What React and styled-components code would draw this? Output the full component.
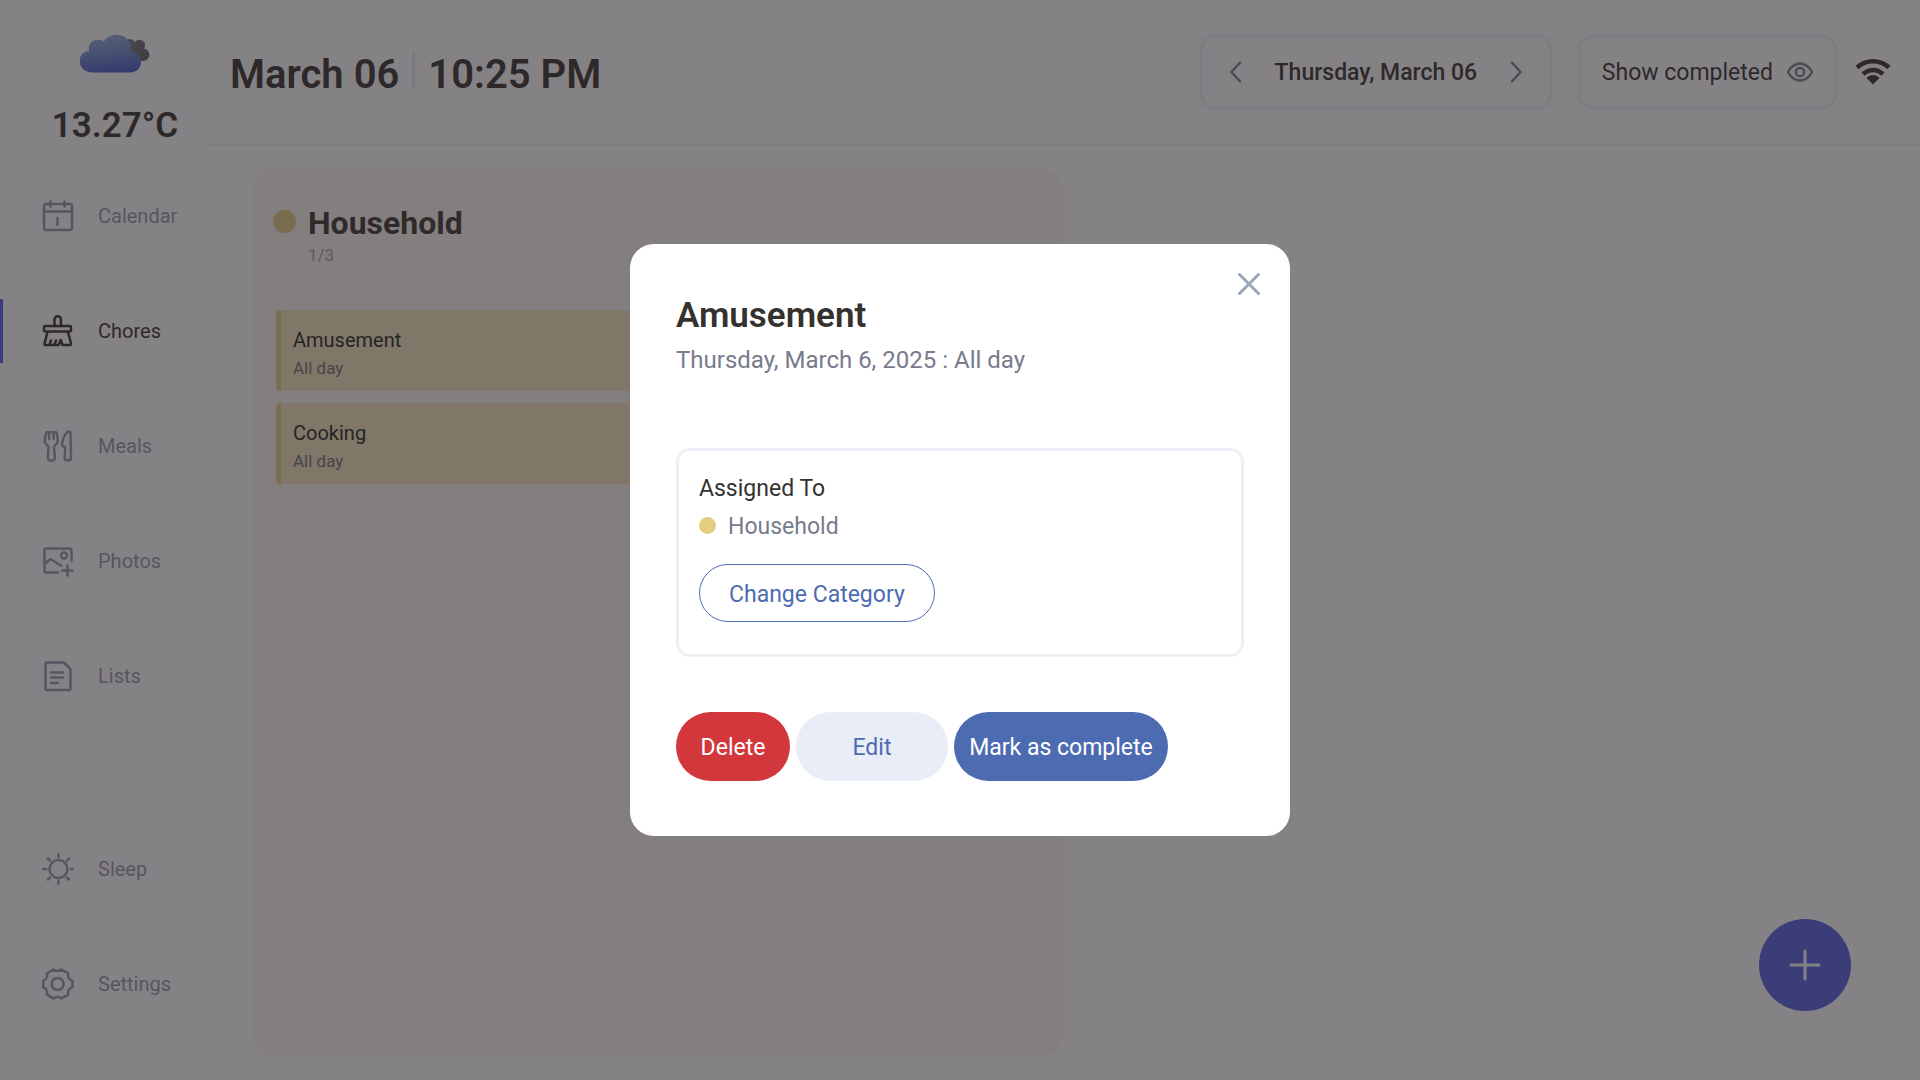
import styled, { createGlobalStyle } from 'styled-components'
import { useState } from 'react'

const GlobalStyle = createGlobalStyle`
    * {
        box-sizing: border-box;
    }
    body {
        margin: 0;
        font-family: Roboto, "Liberation Sans", sans-serif;
        color: #34322d;
        background-color: white;
    }
    button {
        font-family: inherit;
        cursor: pointer;
    }
    svg {
        display: block;
        flex-shrink: 0;
    }
`

const Container = styled.div`
    display: flex;
    min-height: 100vh;
`

const Sidebar = styled.aside`
    width: 205px;
    flex-shrink: 0;
    display: flex;
    flex-direction: column;
    padding-bottom: 64px;
    box-shadow: 4px 0 8px rgba(120, 130, 160, 0.03);
`

const Weather = styled.div`
    height: 184px;
    display: flex;
    flex-direction: column;
    align-items: center;
    padding: 34px 0 0 25px;
`

const Temperature = styled.span`
    margin-top: 33px;
    font-size: 35px;
    line-height: 40px;
    font-weight: 600;
`

const Nav = styled.nav`
    flex: 1;
    display: flex;
    flex-direction: column;
    gap: 51px;
`

const NavLink = styled.a`
    height: 64px;
    display: flex;
    align-items: center;
    gap: 24px;
    padding-left: 39px;
    margin-right: 5px;
    margin-top: ${props => props.$push ? "auto" : "0"};
    border-left: 3px solid ${props => props.$active ? "#5260e0" : "transparent"};
    box-shadow: ${props => props.$active ? "0 -8px 8px -6px rgba(120, 130, 160, 0.06), 0 8px 8px -6px rgba(120, 130, 160, 0.06)" : "none"};
    color: ${props => props.$active ? "#34322d" : "#9499aa"};
    font-size: 20px;
    text-decoration: none;
`

const Main = styled.main`
    flex: 1;
    display: flex;
    flex-direction: column;
`

const Header = styled.header`
    height: 145px;
    display: flex;
    align-items: center;
    justify-content: space-between;
    padding: 0 28px 0 25px;
    border-bottom: 1px solid #eceef4;
`

const Clock = styled.h1`
    margin: 0;
    padding-top: 4px;
    display: flex;
    align-items: center;
    gap: 13px;
    font-size: 40px;
    font-weight: 600;
`

const Divider = styled.span`
    width: 3px;
    height: 36px;
    margin-bottom: 6px;
    background-color: #e4e6ee;
`

const Tools = styled.div`
    display: flex;
    align-items: center;
`

const DateBox = styled.div`
    width: 352px;
    height: 74px;
    display: flex;
    align-items: center;
    justify-content: space-between;
    padding: 0 22px;
    border: 3px solid #f3f4f9;
    border-radius: 14px;
    font-size: 23px;
    font-weight: 500;
`

const ArrowButton = styled.button`
    padding: 4px;
    border: none;
    background: none;
    color: #83818c;
`

const ShowButton = styled.button`
    height: 74px;
    display: flex;
    align-items: center;
    gap: 14px;
    margin: 0 17px 0 26px;
    padding: 0 21px;
    border: 3px solid #f3f4f9;
    border-radius: 14px;
    background: none;
    color: #34322d;
    font-size: 23px;
`

const Board = styled.section`
    flex: 1;
    padding: 23px 48px;
    display: flex;
    background-color: #fefeff;
`

const Category = styled.article`
    width: 50%;
    padding: 36px 23px;
    border-radius: 24px;
    background-color: #fdf8f1;
`

const Dot = styled.span`
    width: ${props => props.$size}px;
    height: ${props => props.$size}px;
    border-radius: 50%;
    background-color: #e5cd80;
`

const CategoryHead = styled.div`
    display: flex;
    align-items: flex-start;
    gap: 12px;
    margin: 0 0 43px -3px;

    ${Dot} {
        margin-top: 6px;
    }
`

const CategoryName = styled.h2`
    margin: 0;
    font-size: 32px;
    line-height: 38px;
    font-weight: 700;
    color: #3d342f;
`

const Count = styled.span`
    display: block;
    margin-top: 1px;
    font-size: 17px;
    line-height: 24px;
    color: #9aa3b5;
`

const TaskList = styled.ul`
    margin: 0;
    padding: 0;
    list-style: none;
    display: flex;
    flex-direction: column;
    gap: 12px;
`

const Task = styled.li`
    height: 81px;
    padding: 16px 12px;
    border-left: 5px solid #e5cd80;
    border-radius: 4px;
    background-color: #f4e5bf;
`

const TaskName = styled.div`
    font-size: 20px;
    line-height: 28px;
    color: #22261f;
`

const TaskTime = styled.div`
    font-size: 17px;
    line-height: 28px;
    color: #6d6f78;
`

const AddButton = styled.button`
    position: fixed;
    right: 69px;
    bottom: 69px;
    width: 92px;
    height: 92px;
    display: flex;
    align-items: center;
    justify-content: center;
    border: none;
    border-radius: 50%;
    background-color: #5260e0;
    color: white;
`

const Overlay = styled.div`
    position: fixed;
    inset: 0;
    display: flex;
    align-items: center;
    justify-content: center;
    background-color: rgba(40, 36, 40, 0.567);
`

const Modal = styled.div`
    position: relative;
    width: 660px;
    padding: 50px 46px 55px;
    border-radius: 24px;
    background-color: white;
`

const CloseButton = styled.button`
    position: absolute;
    top: 24px;
    right: 25px;
    padding: 4px;
    border: none;
    background: none;
    color: #9ba6bd;
`

const Title = styled.h2`
    margin: 0;
    font-size: 35px;
    line-height: 44px;
    font-weight: 600;
    color: #35312e;
`

const Subtitle = styled.p`
    margin: 8px 0 74px;
    font-size: 24px;
    line-height: 28px;
    color: #777b8c;
`

const Panel = styled.div`
    height: 209px;
    padding: 24px 20px;
    border: 3px solid #eef0f8;
    border-radius: 14px;
`

const Label = styled.div`
    font-size: 23px;
    line-height: 28px;
    color: #333230;
`

const Assignee = styled.div`
    display: flex;
    gap: 12px;
    margin: 10px 0 23px;
    font-size: 23px;
    line-height: 28px;
    color: #777b8c;

    ${Dot} {
        margin-top: 4px;
    }
`

const OutlineButton = styled.button`
    height: 58px;
    padding: 2px 29px 0;
    border: 1px solid #4d6bb3;
    border-radius: 29px;
    background-color: white;
    color: #4d6bb3;
    font-size: 23px;
`

const Actions = styled.div`
    display: flex;
    gap: 6px;
    margin-top: 55px;
`

const variants = {
    delete: "background-color: #d1373b; color: white; min-width: 114px;",
    edit: "background-color: #e9edf8; color: #4d6bb3; min-width: 152px;",
    complete: "background-color: #4d6bb1; color: white; min-width: 214px;",
}

const ActionButton = styled.button`
    height: 69px;
    padding: 2px 12px 0;
    border: none;
    border-radius: 35px;
    font-size: 23px;
    ${props => variants[props.$kind]}
`

const Icon = ({ size = 32, width = 2.5, children }) => (
    <svg width={size} height={size} viewBox="0 0 32 32" fill="none" stroke="currentColor" strokeWidth={width} strokeLinecap="round" strokeLinejoin="round" aria-hidden="true">
        {children}
    </svg>
)

const icons = {
    calendar: (
        <>
            <rect x="2" y="4" width="28" height="26" rx="2" />
            <path d="M2 11.500h28M8.500 1.500v5M22.500 1.500v5M15.500 18v7" />
        </>
    ),
    chores: (
        <>
            <path d="M12.500 11V4.500a3.200 3.200 0 0 1 6.400 0V11" />
            <rect x="2" y="11" width="27" height="5.500" rx="1.500" />
            <path d="M5.500 17 2.500 28.500c-.2 1 .3 1.500 1 1.500h13.200l2-5 1.800 5h7.500c.8 0 1.200-.6 1-1.500L26 17M7.500 29.500l1.500-4M12.500 29.500l1.500-4" />
        </>
    ),
    meals: (
        <>
            <path d="M7 9V3c0-1.200-2.600-1.200-3 0-.8 2.500-1.200 6-1.200 8.500 0 2.500 3.500 3.500 3.700 5.500L5.800 28c0 3.500 7 3.500 7 0L12 17c.2-2 3.700-3 3.700-5.500 0-2.500-.2-6-1-8.500-.4-1.200-3-1.200-3 0v6M7 3c.5-1.200 4.200-1.200 4.700 0" />
            <path d="M28.500 3c0-1.600-1.800-2-3.200-.8C22.500 4.500 20 10.500 20 14.500c0 1.800 3.200 1.800 3.200 3.500l-.6 10c0 3.300 6.400 3.300 6.400 0z" />
        </>
    ),
    photos: (
        <>
            <path d="M16 27.500H4a1.500 1.500 0 0 1-1.500-1.500V5A1.500 1.500 0 0 1 4 3.500h24A1.500 1.500 0 0 1 29.500 5v10.500M2.500 19l6-5L19 20.500M20.500 25.500h10M25.500 20.500v10" />
            <circle cx="22" cy="10.500" r="3" />
        </>
    ),
    lists: (
        <>
            <path d="M5 2.500h17l6.500 6.500v19.500a1.500 1.500 0 0 1-1.500 1.500H5a1.500 1.500 0 0 1-1.500-1.500V4A1.500 1.500 0 0 1 5 2.500z" />
            <path d="M9 12.500h12M9 17.500h12M9 23h7" />
        </>
    ),
    sleep: (
        <>
            <circle cx="16.500" cy="16" r="9" />
            <path d="M16.500 1.200v3M16.500 27.800v3M1.200 16h3M28.800 16h2M6 5.500l2 2M25 24.500l2 2M6 26.500l2-2M25 7.500l2-2" />
        </>
    ),
    settings: (
        <>
            <circle cx="15.500" cy="16" r="6" />
            <path d="M11.500 1.600c2.600 1.800 5.400 1.800 8 0l7 3.800c-1.200 3.400.6 6.400 4 7.400v6.400c-3.400 1-5.200 4-4 7.400l-7 3.800c-2.600-1.800-5.400-1.800-8 0l-6.700-3.800c1-3.400-.6-6.400-3.600-7.400v-6.400c3-1 4.600-4 3.600-7.400z" />
        </>
    ),
}

const navItems = [
    { id: "calendar", label: "Calendar" },
    { id: "chores", label: "Chores" },
    { id: "meals", label: "Meals" },
    { id: "photos", label: "Photos" },
    { id: "lists", label: "Lists" },
    { id: "sleep", label: "Sleep", push: true },
    { id: "settings", label: "Settings" },
]

const tasks = ["Amusement", "Cooking"]

const CloudIcon = () => (
    <svg width="70" height="39" viewBox="0 0 70 39" aria-hidden="true">
        <defs>
            <linearGradient id="front" x1="0.35" y1="0" x2="0.55" y2="1">
                <stop offset="0" stopColor="#91aedb" />
                <stop offset="0.45" stopColor="#7290d0" />
                <stop offset="1" stopColor="#435bc8" />
            </linearGradient>
            <linearGradient id="back" x1="0" y1="0" x2="1" y2="1">
                <stop offset="0" stopColor="#7d7d84" />
                <stop offset="1" stopColor="#5c5a62" />
            </linearGradient>
        </defs>
        <path fill="url(#back)" d="M44 28V10a6 6 0 0 1 11-2 5.500 5.500 0 0 1 9 6.500c8 2 7 12.500-2 12.500z" />
        <path fill="url(#front)" d="M12 38.500C-4 38-4 18 9 17 7 7.500 17 3 24 7.500c7-11.500 29-8.500 27 10.500C65 19 64 38.500 50 38.500z" />
    </svg>
)

const WifiIcon = () => (
    <svg width="38" height="28" viewBox="0 0 38 28" fill="none" stroke="#34322d" strokeWidth="4.500" role="img" aria-label="Online">
        <path d="M3 9.500c9-8.500 23-8.500 32 0M9 16c6-5.500 14-5.500 20 0" />
        <path d="M12.500 20c3.500-4 9.500-4 13 0l-6.500 6.500z" fill="#34322d" stroke="none" />
    </svg>
)

const Chevron = ({ d }) => (
    <svg width="16" height="22" viewBox="0 0 16 22" fill="none" stroke="currentColor" strokeWidth="2.500" strokeLinecap="round" strokeLinejoin="round" aria-hidden="true">
        <path d={d} />
    </svg>
)

const App = () => {
    const [open, setOpen] = useState(true)

  return (
    <Container>
        <GlobalStyle />
        <Sidebar>
            <Weather>
                <CloudIcon />
                <Temperature>13.27°C</Temperature>
            </Weather>
            <Nav>
                {navItems.map((item) => (
                    <NavLink key={item.id} href={"#" + item.id} $active={item.id === "chores"} $push={item.push}>
                        <Icon>{icons[item.id]}</Icon>
                        {item.label}
                    </NavLink>
                ))}
            </Nav>
        </Sidebar>
        <Main>
            <Header>
                <Clock>
                    <span>March 06</span>
                    <Divider />
                    <span>10:25 PM</span>
                </Clock>
                <Tools>
                    <DateBox>
                        <ArrowButton aria-label="Previous day">
                            <Chevron d="M11 1.500 2.500 11l8.500 9.500" />
                        </ArrowButton>
                        <span>Thursday, March 06</span>
                        <ArrowButton aria-label="Next day">
                            <Chevron d="M5 1.500l8.500 9.500L5 20.500" />
                        </ArrowButton>
                    </DateBox>
                    <ShowButton>
                        Show completed
                        <svg width="26" height="20" viewBox="0 0 26 20" fill="none" stroke="#7b7984" strokeWidth="2.300" aria-hidden="true">
                            <path d="M1.800 11.300c-.8-.8-.8-1.800 0-2.600C4.500 4.500 8.300 1.500 13 1.500s8.500 3 11.200 7.200c.8.800.8 1.800 0 2.600-2.700 4.200-6.500 7.200-11.200 7.200s-8.500-3-11.200-7.200z" />
                            <circle cx="13" cy="10" r="4.200" />
                        </svg>
                    </ShowButton>
                    <WifiIcon />
                </Tools>
            </Header>
            <Board>
                <Category>
                    <CategoryHead>
                        <Dot $size={23} />
                        <div>
                            <CategoryName>Household</CategoryName>
                            <Count>1/3</Count>
                        </div>
                    </CategoryHead>
                    <TaskList>
                        {tasks.map((task) => (
                            <Task key={task}>
                                <TaskName>{task}</TaskName>
                                <TaskTime>All day</TaskTime>
                            </Task>
                        ))}
                    </TaskList>
                </Category>
            </Board>
        </Main>
        <AddButton aria-label="Add chore">
            <Icon width={3}><path d="M16 2v28M2 16h28" /></Icon>
        </AddButton>
        {/* chore details */}
        {open && (
            <Overlay>
                <Modal role="dialog" aria-labelledby="chore-title">
                    <CloseButton aria-label="Close" onClick={() => setOpen(false)}>
                        <svg width="24" height="24" viewBox="0 0 24 24" fill="none" stroke="currentColor" strokeWidth="3" strokeLinecap="round"><path d="M2.500 2.500l19 19M21.500 2.500l-19 19" /></svg>
                    </CloseButton>
                    <Title id="chore-title">Amusement</Title>
                    <Subtitle>Thursday, March 6, 2025 : All day</Subtitle>
                    <Panel>
                        <Label>Assigned To</Label>
                        <Assignee><Dot $size={17} />Household</Assignee>
                        <OutlineButton>Change Category</OutlineButton>
                    </Panel>
                    <Actions>
                        <ActionButton $kind="delete">Delete</ActionButton>
                        <ActionButton $kind="edit">Edit</ActionButton>
                        <ActionButton $kind="complete">Mark as complete</ActionButton>
                    </Actions>
                </Modal>
            </Overlay>
        )}
    </Container>
  )
}

export default App
